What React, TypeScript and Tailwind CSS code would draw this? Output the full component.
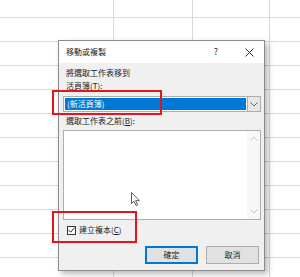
import React from "react";

const font = { fontFamily: '"Noto Sans CJK TC", "Noto Sans", sans-serif' };

function GridRow({ h }: { h: string }) {
  return (
    <div className={`flex border-b border-[#d9d9d9] ${h}`}>
      <div className="w-[114px] shrink-0 border-r border-[#d9d9d9]" />
      <div className="w-[79px] shrink-0 border-r border-[#d9d9d9]" />
      <div className="w-[77px] shrink-0 border-r border-[#d9d9d9]" />
      <div className="flex-1" />
    </div>
  );
}

function ChevronDown({ cls }: { cls: string }) {
  return (
    <svg width="8" height="5" viewBox="0 0 8 5" className={cls}>
      <path d="M0.5 0.5 L4 4 L7.5 0.5" fill="none" stroke="currentColor" strokeWidth="1" />
    </svg>
  );
}

function ChevronUp({ cls }: { cls: string }) {
  return (
    <svg width="8" height="5" viewBox="0 0 8 5" className={cls}>
      <path d="M0.5 4.5 L4 1 L7.5 4.5" fill="none" stroke="currentColor" strokeWidth="1" />
    </svg>
  );
}

export default function App() {
  return (
    <div className="relative w-[300px] h-[277px] overflow-hidden bg-white" style={font}>
      {/* spreadsheet grid */}
      <div className="flex flex-col">
        <GridRow h="h-[18px]" />
        {Array.from({ length: 11 }).map((_, i) => (
          <GridRow key={i} h="h-[24px]" />
        ))}
      </div>

      {/* dialog */}
      <div className="absolute left-[58px] top-[40px] w-[207px] h-[231px] border border-[#8c8c8c] bg-[#f0f0f0] flex flex-col shadow-[3px_3px_6px_rgba(0,0,0,0.28)]">
        <div className="h-[22px] bg-white flex items-center pl-[7px] pr-[10px] text-[8px] text-[#222] leading-[10px]">
          <span>移動或複製</span>
          <span className="ml-auto mr-[27px] text-[9px]">?</span>
          <svg width="9" height="9" viewBox="0 0 9 9" className="text-[#333]">
            <path d="M0.5 0.5 L8.5 8.5 M8.5 0.5 L0.5 8.5" stroke="currentColor" strokeWidth="1" />
          </svg>
        </div>
        <div className="flex-1 flex flex-col pl-[4px] pr-[3px] text-[8px] leading-[10px] text-[#222]">
          <div className="mt-[5px] ml-[3px] h-[10px]">將選取工作表移到</div>
          <div className="mt-[3px] ml-[3px] h-[10px]">
            活頁簿(<span className="underline">T</span>):
          </div>
          <div className="mt-[5px] h-[16px] flex border border-[#adadad] bg-white">
            <div className="flex-1 m-[1px] bg-[#0078d7] text-white flex items-center pl-[2px]">(新活頁簿)</div>
            <div className="w-[13px] bg-[#e6e6e6] border-l border-[#adadad] flex items-center justify-center">
              <ChevronDown cls="text-[#666]" />
            </div>
          </div>
          <div className="mt-[4px] ml-[3px] h-[10px]">
            選取工作表之前(<span className="underline">B</span>):
          </div>
          <div className="mt-[4px] h-[90px] flex border border-[#adadad] bg-white">
            <div className="flex-1" />
            <div className="w-[13px] bg-[#f7f7f7] flex flex-col items-center justify-between py-[5px]">
              <ChevronUp cls="text-[#c4c4c4]" />
              <ChevronDown cls="text-[#c4c4c4]" />
            </div>
          </div>
          <div className="mt-[5px] h-[10px] flex items-center ml-[4px]">
            <div className="w-[9px] h-[9px] border border-[#333] bg-white flex items-center justify-center">
              <svg width="7" height="6" viewBox="0 0 7 6">
                <path d="M0.5 3 L2.7 5.2 L6.5 0.7" fill="none" stroke="#222" strokeWidth="1" />
              </svg>
            </div>
            <span className="ml-[3px]">
              建立複本(<span className="underline">C</span>)
            </span>
          </div>
          <div className="mt-[11px] flex justify-end gap-[8px] pr-[2px]">
            <div className="w-[53px] h-[18px] bg-[#e1e1e1] border-2 border-[#0078d7] flex items-center justify-center">
              確定
            </div>
            <div className="w-[53px] h-[18px] bg-[#e1e1e1] border border-[#adadad] flex items-center justify-center">
              取消
            </div>
          </div>
        </div>
      </div>

      {/* red highlight boxes */}
      <div className="absolute left-[52px] top-[90px] w-[110px] h-[25px] border-2 border-[#e5141c]" />
      <div className="absolute left-[52px] top-[211px] w-[85px] h-[32px] border-2 border-[#e5141c]" />

      {/* mouse cursor */}
      <svg className="absolute left-[131px] top-[192px]" width="10" height="15" viewBox="0 0 10 15">
        <path d="M0.5 0.5 L0.5 11.5 L3 9.2 L5 13.5 L6.6 12.8 L4.7 8.6 L8.3 8.6 Z" fill="white" stroke="#333" strokeWidth="0.8" />
      </svg>
    </div>
  );
}
